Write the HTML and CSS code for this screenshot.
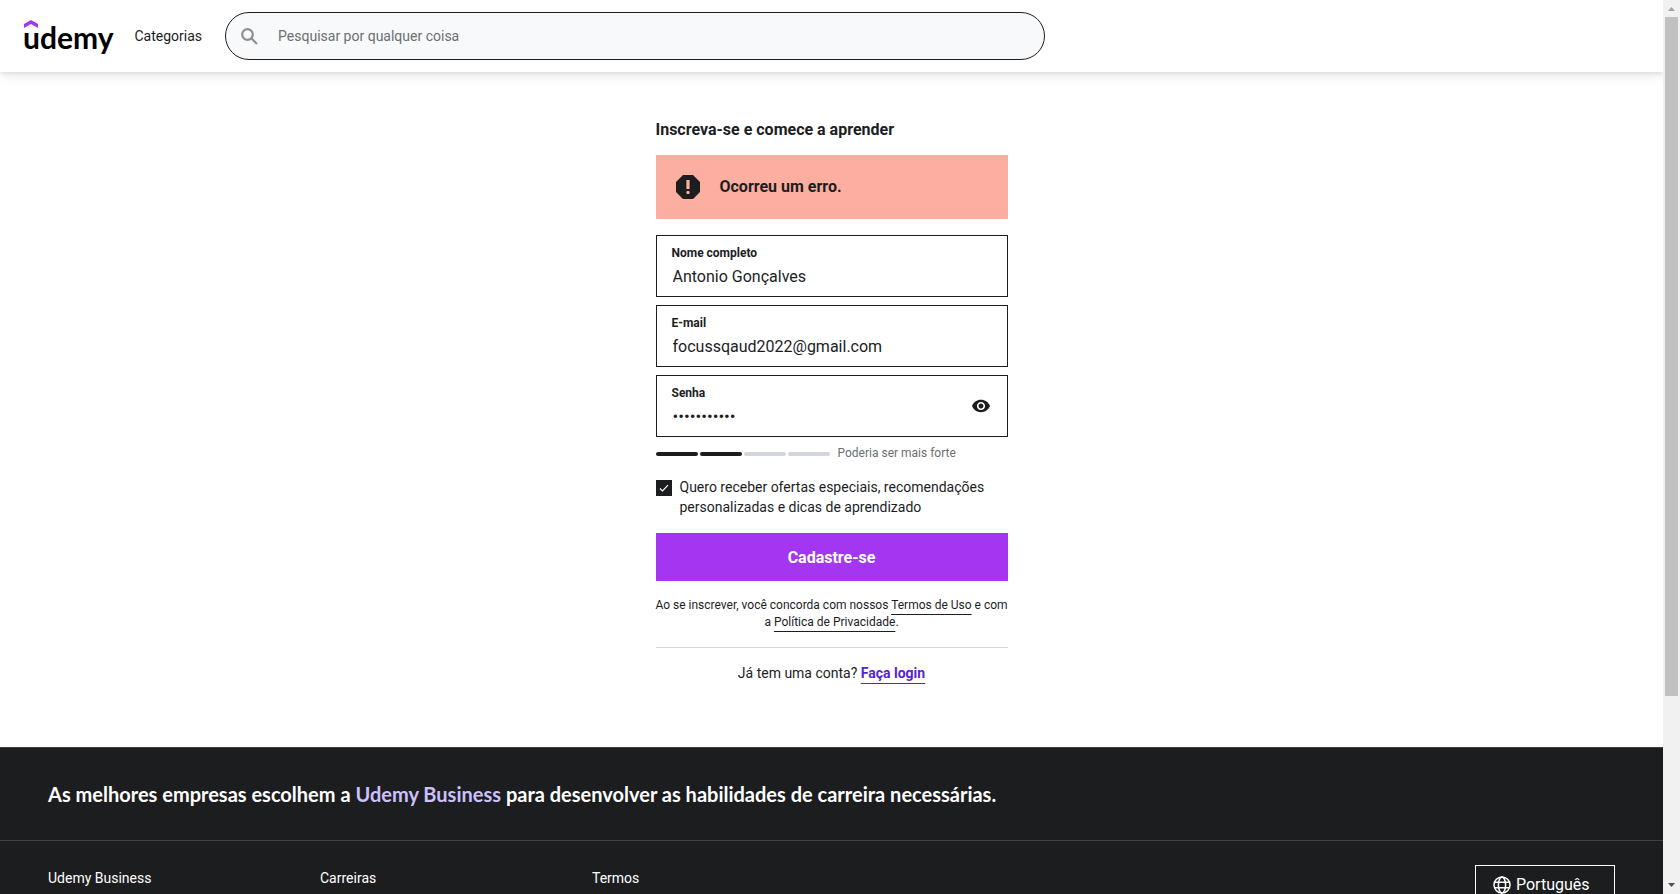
FILE: index.html
```html
<!DOCTYPE html>
<html lang="pt">
<head>
<meta charset="utf-8">
<title>Inscreva-se e comece a aprender | Udemy</title>
<meta name="viewport" content="width=device-width, initial-scale=1">
<link rel="stylesheet" href="styles.css">
</head>
<body>
<div class="window">
  <div class="page">
    <header class="header">
      <a class="logo" href="#" aria-label="Udemy">
        <svg class="logo-hat" viewBox="0 0 14 8" aria-hidden="true"><path d="M7 0 14 4v4L7 4 0 8V4z"/></svg>
        <span class="logo-word">udemy</span>
      </a>
      <button class="categories" type="button">Categorias</button>
      <form class="search" role="search">
        <svg class="search-icon" viewBox="0 0 17 17" aria-hidden="true"><circle cx="6.5" cy="6.5" r="5.3"/><path d="M10.5 10.5 16 16"/></svg>
        <input class="search-input" type="text" aria-label="Pesquisar" placeholder="Pesquisar por qualquer coisa">
      </form>
    </header>

    <main class="main">
      <div class="signup">
        <h1 class="title">Inscreva-se e comece a aprender</h1>
        <div class="alert" role="alert">
          <svg class="alert-icon" viewBox="0 0 24 24" aria-hidden="true"><path fill-rule="evenodd" d="M7 0h10l7 7v10l-7 7H7l-7-7V7zM10.400 5v9h3.200V5zM12 15.800a1.700 1.700 0 1 0 0 3.400 1.700 1.700 0 0 0 0-3.400z"/></svg>
          <span>Ocorreu um erro.</span>
        </div>
        <form class="form">
          <div class="field">
            <label class="field-label" for="name">Nome completo</label>
            <input class="field-input" id="name" type="text" value="Antonio Gonçalves">
          </div>
          <div class="field">
            <label class="field-label" for="email">E-mail</label>
            <input class="field-input" id="email" type="email" value="focussqaud2022@gmail.com">
          </div>
          <div class="field field-password">
            <div class="field-body">
              <label class="field-label" for="password">Senha</label>
              <input class="field-input password" id="password" type="password" value="segredo1234">
            </div>
            <button class="reveal" type="button" aria-label="Mostrar senha">
              <svg viewBox="1 4 22 16" aria-hidden="true"><path d="M12 4.500C7 4.500 2.730 7.610 1 12c1.730 4.390 6 7.500 11 7.500s9.270-3.110 11-7.500c-1.730-4.390-6-7.500-11-7.500zM12 17c-2.760 0-5-2.240-5-5s2.240-5 5-5 5 2.240 5 5-2.240 5-5 5zm0-8c-1.660 0-3 1.340-3 3s1.340 3 3 3 3-1.340 3-3-1.340-3-3-3z"/></svg>
            </button>
          </div>
          <div class="strength">
            <span class="bar bar-on"></span><span class="bar bar-on"></span><span class="bar"></span><span class="bar"></span>
            <span class="strength-text">Poderia ser mais forte</span>
          </div>
          <label class="offers" for="offers">
            <span class="tick">
              <input class="tick-input" id="offers" type="checkbox" checked>
              <svg class="tick-mark" viewBox="0 0 16 16" aria-hidden="true"><path d="M4 8.500 6.500 11 12 5.200"/></svg>
            </span>
            <span>Quero receber ofertas especiais, recomendações personalizadas e dicas de aprendizado</span>
          </label>
          <button class="submit" type="submit">Cadastre-se</button>
        </form>
        <p class="terms">Ao se inscrever, você concorda com nossos <a href="#">Termos de Uso</a> e com a&nbsp;<a href="#">Política de Privacidade</a>.</p>
        <p class="login">Já tem uma conta? <a href="#">Faça login</a></p>
      </div>
    </main>

    <footer class="footer">
      <p class="promo">As melhores empresas escolhem a <a href="#">Udemy Business</a> para desenvolver as habilidades de carreira necessárias.</p>
      <div class="footer-nav">
        <nav class="links">
          <a href="#">Udemy Business</a>
          <a href="#">Carreiras</a>
          <a href="#">Termos</a>
        </nav>
        <button class="language" type="button">
          <svg viewBox="0 0 18 18" aria-hidden="true"><circle cx="9" cy="9" r="8"/><ellipse cx="9" cy="9" rx="3.600" ry="8"/><path d="M1.500 6.200h15M1.500 11.800h15"/></svg>
          <span>Português</span>
        </button>
      </div>
    </footer>
  </div>
  <div class="scrollbar" aria-hidden="true">
    <svg class="arrow arrow-up" viewBox="0 0 7 4"><path d="M3.500 0 7 4H0z"/></svg>
    <div class="track"><div class="thumb"></div></div>
    <svg class="arrow" viewBox="0 0 7 4"><path d="M0 0h7L3.500 4z"/></svg>
  </div>
</div>
</body>
</html>
```
FILE: styles.css
```css
* { box-sizing: border-box; }

body {
  margin: 0;
  background: #fff;
  color: #1c1d1f;
  font-family: Roboto, "Liberation Sans", sans-serif;
  font-size: 14px;
  line-height: 20px;
}

button, input { font: inherit; color: inherit; }
button { border: 0; background: none; padding: 0; cursor: pointer; }
a { color: inherit; text-decoration: none; }
h1, p { margin: 0; }

.window { display: flex; height: 100vh; overflow: hidden; }
.page { flex: 1; min-width: 0; overflow: hidden; }

/* Header */
.header {
  display: flex;
  align-items: center;
  height: 72px;
  padding: 0 24px;
  box-shadow: 0 2px 4px rgba(0, 0, 0, .08), 0 4px 12px rgba(0, 0, 0, .08);
}
.logo { display: flex; flex-direction: column; padding-bottom: 4px; color: #000; }
.logo-hat { width: 14px; height: 8px; fill: #a435f0; }
.logo-word { margin: -3px 0 0 -1px; font: 700 30px/24px Lato, sans-serif; }
.categories { margin: 0 23px 0 21px; }
.search {
  display: flex;
  align-items: center;
  flex: 0 1 820px;
  height: 48px;
  padding: 0 15px;
  gap: 20px;
  border: 1px solid #1c1d1f;
  border-radius: 24px;
  background: #f7f9fa;
}
.search-icon { width: 17px; height: 17px; fill: none; stroke: #8d8f91; stroke-width: 2.2; }
.search-input { flex: 1; min-width: 0; border: 0; padding: 0; background: none; outline: 0; }
.search-input::placeholder { color: #6a6f73; opacity: 1; }

/* Sign-up form */
.main { padding: 48px 24px 64px; }
.signup { max-width: 352px; margin: 0 auto; }
.title { font-size: 16px; line-height: 20px; font-weight: 700; margin-bottom: 15px; }
.alert {
  display: flex;
  align-items: center;
  gap: 20px;
  height: 64px;
  padding: 0 20px;
  margin-bottom: 16px;
  background: #fcaea0;
  font-size: 16px;
  line-height: 22px;
  font-weight: 700;
}
.alert-icon { width: 24px; height: 24px; fill: #1c1d1f; }
.field {
  height: 62px;
  padding: 7px 15px;
  margin-bottom: 8px;
  border: 1px solid #1c1d1f;
}
.field-label { display: block; font-size: 12px; line-height: 20px; font-weight: 700; }
.field-input {
  display: block;
  width: 100%;
  height: 26px;
  padding: 0 1px;
  border: 0;
  outline: 0;
  background: none;
  font-size: 16px;
}
.password { font-size: 17px; }
.field-password { display: flex; align-items: center; }
.field-body { flex: 1; }
.reveal { display: flex; padding: 0 2px; }
.reveal svg { width: 18px; height: 14px; fill: #1c1d1f; }
.strength { display: flex; align-items: center; gap: 2px; height: 17px; }
.bar { width: 42px; height: 4px; border-radius: 2px; background: #d1d7dc; }
.bar-on { background: #1c1d1f; }
.strength-text { margin-left: 6px; font-size: 12px; line-height: 17px; color: #6a6f73; }
.offers { display: flex; gap: 8px; margin: 15px 0 16px; }
.tick { display: grid; flex: none; width: 16px; height: 16px; margin-top: 3px; }
.tick-input { appearance: none; grid-area: 1 / 1; width: 16px; height: 16px; margin: 0; border: 1px solid #1c1d1f; }
.tick-input:checked { background: #1c1d1f; }
.tick-mark { grid-area: 1 / 1; width: 16px; height: 16px; fill: none; stroke: #fff; stroke-width: 1.2; pointer-events: none; }
.submit { display: block; width: 100%; height: 48px; padding-top: 2px; background: #a435f0; color: #fff; font-size: 16px; font-weight: 700; }
.terms { margin: 16px -4px 0; font-size: 12px; line-height: 17px; text-align: center; }
.terms a, .login a { text-decoration: underline 1px; text-underline-offset: 5px; text-decoration-skip-ink: none; }
.login { margin-top: 16px; padding-top: 15px; border-top: 1px solid #d1d7dc; text-align: center; }
.login a { color: #5624d0; font-weight: 700; }

/* Footer */
.footer { background: #1c1d1f; color: #fff; border-top: 1px solid #3e4143; }
.promo { padding: 32px 48px; border-bottom: 1px solid #3e4143; font: 700 20px/28px Lato, sans-serif; }
.promo a { color: #cec0fc; }
.footer-nav { display: flex; justify-content: space-between; padding: 24px 48px; }
.links { display: grid; grid-template-columns: repeat(3, 256px); gap: 16px; padding-top: 3px; }
.language {
  display: flex;
  align-items: center;
  gap: 5px;
  width: 140px;
  height: 40px;
  padding: 0 17px;
  border: 1px solid #fff;
  font-size: 16px;
}
.language svg { width: 18px; height: 18px; fill: none; stroke: #fff; stroke-width: 1.5; }

/* Window scrollbar */
.scrollbar { display: flex; flex-direction: column; align-items: center; width: 17px; padding: 7px 0; background: #f1f1f1; }
.arrow { width: 7px; height: 4px; fill: #505050; }
.arrow-up { fill: #a3a3a3; }
.track { flex: 1; width: 13px; margin: 6px 0; }
.thumb { height: 79%; background: #c1c1c1; }
```
